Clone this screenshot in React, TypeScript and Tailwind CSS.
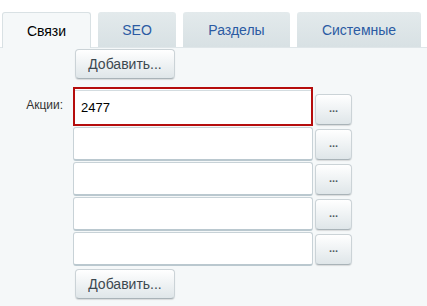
import React from "react";

const tabs = [
  { label: "Связи", width: "w-[89px]", active: true },
  { label: "SEO", width: "w-[78px]", active: false },
  { label: "Разделы", width: "w-[107px]", active: false },
  { label: "Системные", width: "w-[124px]", active: false },
];

const btn =
  "rounded-[4px] border border-[#cbd3d7] border-b-[#a9b3b8] bg-gradient-to-b from-white to-[#dfe6e9] shadow-[0_1px_1px_rgba(0,0,0,0.12)] text-[#3c4850]";

const AddButton = () => (
  <button className={`${btn} h-[30px] w-[100px] text-[14px] leading-none`}>Добавить...</button>
);

const DotsButton = () => (
  <button className={`${btn} h-[31px] w-[37px] text-[11px] font-bold leading-none text-[#525d64] pb-[2px]`}>...</button>
);

export default function App() {
  const values = ["2477", "", "", "", ""];

  return (
    <div className="w-[427px] h-[306px] overflow-hidden bg-white flex flex-col font-['Liberation_Sans',Arial,sans-serif]">
      {/* Tabs */}
      <div className="flex gap-[7px] pl-[2px] pt-[12px] relative z-10">
        {tabs.map((t) =>
          t.active ? (
            <div
              key={t.label}
              className={`${t.width} h-[36px] -mb-[1px] flex items-center justify-center pt-[1px] rounded-t-[3px] border border-b-0 border-[#d9e1e4] bg-[#f5f8f9] text-[14px] text-black`}
            >
              {t.label}
            </div>
          ) : (
            <div
              key={t.label}
              className={`${t.width} h-[35px] flex items-center justify-center pt-[1px] rounded-t-[3px] bg-gradient-to-b from-[#e3eaec] to-[#d8e1e4] text-[14px] text-[#2b5ba3]`}
            >
              {t.label}
            </div>
          )
        )}
      </div>

      {/* Panel */}
      <div className="flex-1 border-t border-[#dfe6e9] bg-[#f5f8f9] pt-[1px]">
        <div className="pl-[75px]">
          <AddButton />
        </div>

        <div className="flex mt-[8px]">
          <div className="w-[73px] shrink-0 pr-[10px] pt-[9px] text-right text-[12px] text-[#333]">Акции:</div>
          <div className="flex flex-col">
            {values.map((v, i) => (
              <div key={i} className="flex items-end gap-[2px]">
                {i === 0 ? (
                  <div className="w-[240px] h-[39px] border-2 border-[#b50d0d] bg-white flex items-center">
                    <div className="w-full h-full mt-[2px] border-t border-[#d3dce0] flex items-center pl-[6px] text-[13px] text-black">
                      {v}
                    </div>
                  </div>
                ) : (
                  <div className="w-[240px] h-[34px] mt-[1px] rounded-[3px] border border-[#c8d2d7] border-b-[#bac8cf] border-b-2 bg-white" />
                )}
                <div className="pb-[1px]">
                  <DotsButton />
                </div>
              </div>
            ))}
          </div>
        </div>

        <div className="pl-[75px] mt-[3px]">
          <AddButton />
        </div>
      </div>
    </div>
  );
}
